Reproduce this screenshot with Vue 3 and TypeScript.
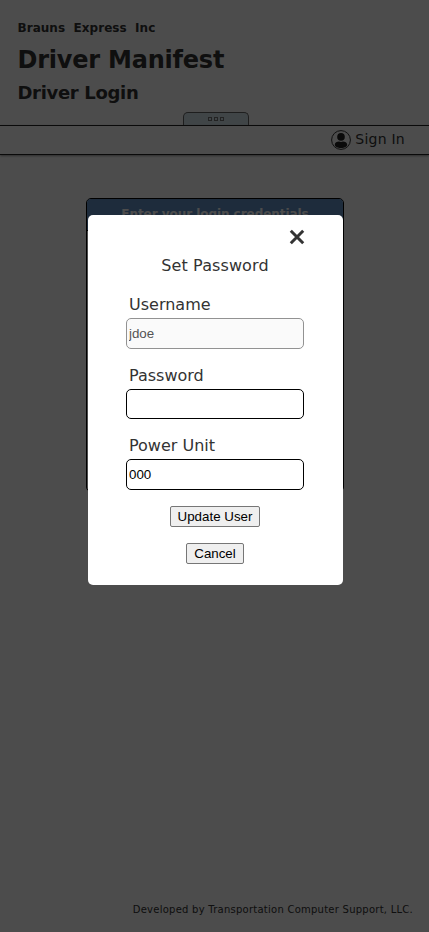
<script setup lang="ts">
import { ref } from 'vue'

const open = ref(true)
const username = ref('jdoe')
const password = ref('')
const powerUnit = ref('000')
const close = () => { open.value = false }
</script>

<template>
  <div class="page">
    <header class="banner">
      <div class="titles">
        <p class="company">Brauns Express Inc</p>
        <h1>Driver Manifest</h1>
        <h2>Driver Login</h2>
      </div>
      <button class="toggle" type="button" aria-label="Toggle header">
        <span class="dot"></span><span class="dot"></span><span class="dot"></span>
      </button>
    </header>
    <nav class="bar">
      <svg class="avatar" viewBox="0 0 20 20" aria-hidden="true">
        <circle cx="10" cy="10" r="9.4" fill="none" stroke="#333" stroke-width="1" />
        <circle cx="10" cy="6.9" r="3.8" fill="#222" />
        <path d="M3.8 14.8C3.8 12.7 6 11.6 8 11.6Q10 12.4 12 11.6C14 11.6 16.2 12.7 16.2 14.8C16.2 16.8 13.4 18 10 18S3.8 16.8 3.8 14.8Z" fill="#222" />
      </svg>
      <span class="sign">Sign In</span>
    </nav>
    <main class="content">
      <section class="login">
        <div class="login-head"><span>Enter your login credentials</span></div>
      </section>
    </main>
    <footer class="footer"><span>Developed by Transportation Computer Support, LLC.</span></footer>
  </div>

  <div v-if="open" class="overlay">
    <form class="modal" @submit.prevent="close">
      <button class="close" type="button" aria-label="Close" @click="close">
        <svg viewBox="0 0 16 16"><path d="M1.8 1.8L14.2 14.2M14.2 1.8L1.8 14.2" stroke="#333" stroke-width="3" fill="none" /></svg>
      </button>
      <p class="modal-title"><span>Set Password</span></p>
      <label class="field first"><span class="label">Username</span><input v-model="username" type="text" disabled /></label>
      <label class="field second"><span class="label">Password</span><input v-model="password" type="password" /></label>
      <label class="field third"><span class="label">Power Unit</span><input v-model="powerUnit" type="text" /></label>
      <button class="action update" type="submit">Update User</button>
      <button class="action cancel" type="button" @click="close">Cancel</button>
    </form>
  </div>
</template>

<style>
body { background: #fff; }
</style>

<style scoped>
* { box-sizing: border-box; }
.page {
  display: flex;
  flex-direction: column;
  height: 932px;
  color: #333;
  font-family: Verdana, "DejaVu Sans", sans-serif;
  white-space: nowrap;
}
.banner {
  display: flex;
  flex-direction: column;
  height: 125px;
}
.titles { height: 112px; padding: 20px 0 0 17.5px; }
p, h1, h2 { margin: 0; }
.company {
  height: 16px;
  font-size: 12px;
  font-weight: bold;
  line-height: 16px;
  letter-spacing: 0.04px;
  word-spacing: 4.2px;
}
h1 { margin-top: 9px; font-size: 24px; line-height: 30px; letter-spacing: -0.22px; }
h2 { margin-top: 7px; font-size: 18px; line-height: 22px; letter-spacing: -0.32px; }
.toggle {
  display: flex;
  justify-content: center;
  gap: 2px;
  width: 66px;
  height: 13px;
  margin: 0 0 0 183px;
  padding: 4px 0 0;
  border: 1px solid #666;
  border-bottom: 0;
  border-radius: 5px 5px 0 0;
  background: #d8e6ee;
}
.dot { width: 4px; height: 4px; border: 1px solid #777; }
.bar {
  display: flex;
  align-items: center;
  justify-content: flex-end;
  flex: none;
  height: 30px;
  padding: 0 24px 1px 0;
  gap: 4px;
  border-top: 1px solid #222;
  border-bottom: 1px solid #222;
  box-shadow: 0 1px 2px #999;
}
.avatar { width: 20px; height: 20px; }
.sign { padding-bottom: 1px; font-size: 14px; line-height: 20px; letter-spacing: 0.25px; }
.content { flex: 1; padding-top: 43px; }
.login {
  width: 258px;
  height: 294px;
  margin-left: 86px;
  border: 1px solid #000;
  border-radius: 5px;
  overflow: hidden;
}
.login-head {
  height: 32px;
  border-bottom: 1px solid #000;
  background: #6694c8;
  color: #fff;
  text-align: center;
  font-size: 12px;
  font-weight: bold;
  line-height: 31px;
  letter-spacing: -0.05px;
}
.footer {
  height: 32px;
  padding-right: 16px;
  font-size: 10px;
  line-height: 20px;
  letter-spacing: 0.25px;
  text-align: right;
}
.overlay {
  position: fixed;
  inset: 0;
  display: flex;
  align-items: flex-start;
  padding: 215px 0 0 88px;
  background: rgba(0, 0, 0, .7);
}
.modal {
  display: flex;
  flex-direction: column;
  align-items: center;
  width: 255px;
  height: 370px;
  padding: 14px 1px 0 0;
  border-radius: 5px;
  background: #fff;
  color: #333;
  font-family: Verdana, "DejaVu Sans", sans-serif;
}
.close {
  width: 16px;
  height: 16px;
  margin: 0 37px 0 0;
  padding: 0;
  align-self: flex-end;
  border: 0;
  background: none;
}
.close svg { display: block; width: 16px; height: 16px; }
.modal-title { margin-top: 11px; font-size: 16px; line-height: 20px; letter-spacing: 0.1px; }
.field { display: flex; flex-direction: column; width: 178px; }
.label { height: 20px; padding-left: 3px; font-size: 16px; line-height: 20px; }
.first { margin-top: 19px; }
.second, .third { margin-top: 17px; }
.field input {
  width: 178px;
  height: 31px;
  margin: 3px 0 0;
  padding: 1px 2px;
  border: 1px solid #000;
  border-radius: 5px;
  background: #fff;
  color: #000;
  font: 13.333px "Liberation Sans", Arial, sans-serif;
}
.second input { height: 30px; }
.field input:disabled { border-color: #929292; background: #fafafa; color: #545454; }
.action {
  height: 21px;
  padding: 0;
  border: 1px solid #767676;
  border-radius: 2px;
  background: #efefef;
  color: #000;
  font: 13.333px "Liberation Sans", Arial, sans-serif;
}
.update { width: 90px; margin-top: 16px; }
.cancel { width: 58px; margin-top: 16px; }
</style>
